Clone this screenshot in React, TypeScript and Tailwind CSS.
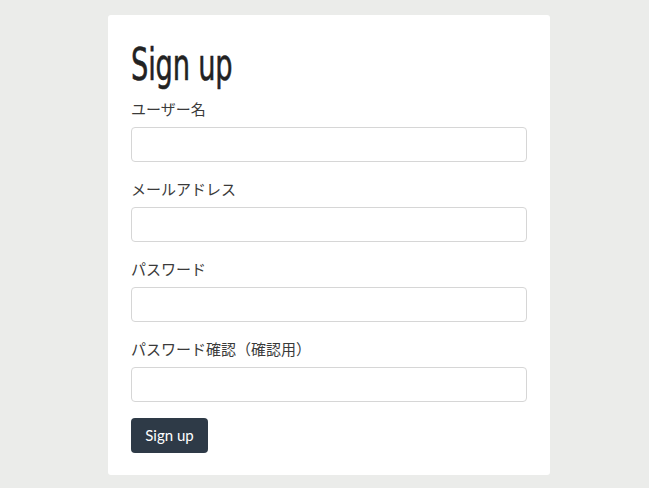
import React from 'react';

const fields = ['ユーザー名', 'メールアドレス', 'パスワード', 'パスワード確認（確認用）'];

const App: React.FC = () => {
    return (
        <div className="min-h-[488px] w-full bg-[#ebecea] pt-[15px]">
            <div className="ml-[108px] w-[442px] rounded-[3px] bg-white px-[23px] pt-[26px] pb-[22px]">
                <h1 className="mb-[10px] h-[48px] text-[44px] leading-[48px] text-[#222] [font-family:'DejaVu_Sans',sans-serif]">
                    <span className="inline-block origin-left scale-x-[0.62] tracking-[-0.3px] [-webkit-text-stroke:0.6px_#222]">Sign up</span>
                </h1>
                {fields.map((label) => (
                    <div key={label} className="mb-[17px]">
                        <label className="mb-[8px] block text-[15px] leading-[20px] text-[#3a3a3a] [font-family:'Noto_Sans_CJK_JP',sans-serif]">
                            {label}
                        </label>
                        <input
                            type="text"
                            className="block h-[35px] w-full rounded-[4px] border border-[#d6d6d6] bg-white px-3 outline-none"
                        />
                    </div>
                ))}
                <button className="-mt-[1px] h-[35px] w-[77px] rounded-[4px] bg-[#2e3a47] text-[15px] text-white [font-family:'Lato',sans-serif]">
                    Sign up
                </button>
            </div>
        </div>
    );
};

export default App;
